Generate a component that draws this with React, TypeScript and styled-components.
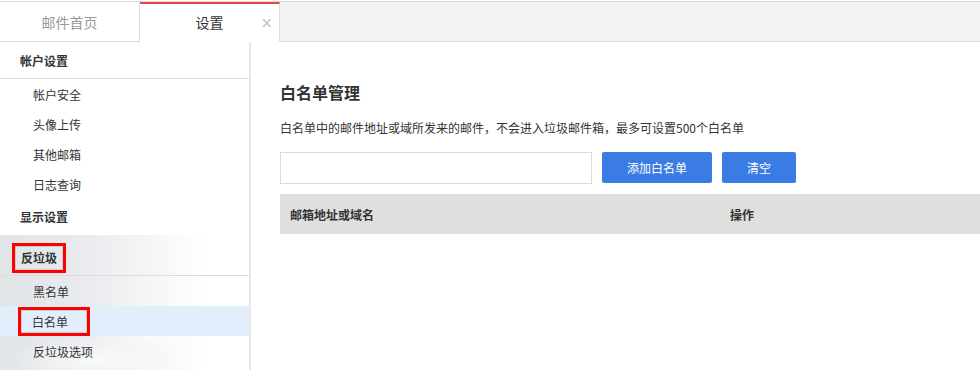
import React from "react";
import styled, { createGlobalStyle } from "styled-components";

const Global = createGlobalStyle`
  html, body { margin: 0; padding: 0; overflow: hidden; background: #fff; }
  body { font-family: "Noto Sans CJK SC", "Microsoft YaHei", "Noto Sans", sans-serif; color: #333; }
  * { box-sizing: border-box; }
`;

const Page = styled.div`
  width: 980px;
  height: 370px;
  padding-top: 1px;
  display: flex;
  flex-direction: column;
  overflow: hidden;
`;

const TabBar = styled.div`
  display: flex;
  height: 41px;
  border-top: 1px solid #dcdcdc;
  flex: none;
`;

const Tab = styled.div<{ $active?: boolean }>`
  position: relative;
  width: 140px;
  display: flex;
  align-items: center;
  justify-content: center;
  font-size: 14px;
  color: ${(p) => (p.$active ? "#333" : "#999")};
  background: #fff;
  border-right: 1px solid #dcdcdc;
  border-bottom: 1px solid ${(p) => (p.$active ? "#fff" : "#dcdcdc")};
  border-top: 2px solid ${(p) => (p.$active ? "#e8474a" : "transparent")};
  padding-bottom: 1px;
`;

const Close = styled.span`
  position: absolute;
  right: 6px;
  top: 11px;
  font-size: 15px;
  color: #c4c4c4;
  font-family: "DejaVu Sans", sans-serif;
  line-height: 16px;
`;

const TabFill = styled.div`
  flex: 1;
  background: #f2f2f2;
  border-bottom: 1px solid #dcdcdc;
`;

const Body = styled.div`
  flex: 1;
  display: flex;
  min-height: 0;
`;

const Sidebar = styled.div`
  width: 251px;
  flex: none;
  border-right: 2px solid #e8e8e8;
  display: flex;
  flex-direction: column;
`;

const Section = styled.div<{ $bg?: boolean }>`
  display: flex;
  flex-direction: column;
  ${(p) =>
    p.$bg
      ? `background:
          radial-gradient(ellipse 60px 20px at 150px 95px, rgba(255,255,255,0.8), rgba(255,255,255,0) 100%),
          radial-gradient(ellipse 80px 25px at 90px 125px, rgba(255,255,255,0.7), rgba(255,255,255,0) 100%),
          linear-gradient(to right, #e1e5e8 0%, #e9ebee 35%, #f5f6f7 62%, #ffffff 82%);
        flex: 1;`
      : ""}
`;

const Header = styled.div<{ $border?: boolean; $tall?: boolean }>`
  height: ${(p) => (p.$tall ? "41px" : p.$border ? "37px" : "36px")};
  padding-left: 20px;
  padding-top: ${(p) => (p.$tall ? "6px" : "0")};
  display: flex;
  align-items: center;
  font-size: 12px;
  font-weight: bold;
  color: #333;
  border-bottom: 1px solid ${(p) => (p.$border ? "#dcdcdc" : "transparent")};
  flex: none;
`;

const Item = styled.div<{ $active?: boolean }>`
  height: 30px;
  padding-left: 33px;
  display: flex;
  align-items: center;
  font-size: 12px;
  color: #333;
  background: ${(p) => (p.$active ? "#e2eefc" : "transparent")};
  flex: none;
`;

const Marked = styled.span<{ $pad: string }>`
  display: inline-block;
  line-height: 18px;
  padding: ${(p) => p.$pad};
  outline: 3px solid #f00;
  border: 1px solid #c9ccd0;
`;

const MarkedHead = styled(Marked)`
  margin-left: -5px;
`;

const MarkedItem = styled(Marked)`
  margin-left: -12px;
`;

const Main = styled.div`
  flex: 1;
  padding: 38px 0 0 29px;
  display: flex;
  flex-direction: column;
`;

const Title = styled.h2`
  margin: 0;
  font-size: 16px;
  line-height: 24px;
  font-weight: bold;
  color: #333;
`;

const Desc = styled.p`
  margin: 14px 0 0;
  font-size: 12px;
  line-height: 20px;
  color: #333;
`;

const FormRow = styled.div`
  display: flex;
  gap: 10px;
  margin-top: 14px;
`;

const Input = styled.input`
  width: 312px;
  height: 32px;
  border: 1px solid #dcdcdc;
  outline: none;
  padding: 0 8px;
  font-size: 12px;
`;

const Button = styled.button<{ $w: number }>`
  width: ${(p) => p.$w}px;
  height: 31px;
  border: none;
  border-radius: 2px;
  background: #3b7ce4;
  color: #fff;
  font-size: 12px;
  font-family: inherit;
  padding: 0;
  cursor: pointer;
`;

const TableHead = styled.div`
  margin-top: 10px;
  height: 40px;
  background: #dfdfdf;
  display: grid;
  grid-template-columns: 450px 1fr;
  align-items: center;
  font-size: 12px;
  font-weight: bold;
  color: #333;
`;

const Col = styled.div<{ $pad?: number }>`
  padding-left: ${(p) => p.$pad ?? 0}px;
`;

export default function App() {
  return (
    <Page>
      <Global />
      <TabBar>
        <Tab>邮件首页</Tab>
        <Tab $active>
          设置
          <Close>×</Close>
        </Tab>
        <TabFill />
      </TabBar>
      <Body>
        <Sidebar>
          <Section>
            <Header $border>帐户设置</Header>
            <Item>帐户安全</Item>
            <Item>头像上传</Item>
            <Item>其他邮箱</Item>
            <Item>日志查询</Item>
          </Section>
          <Section>
            <Header>显示设置</Header>
          </Section>
          <Section $bg>
            <Header $border $tall>
              <MarkedHead $pad="2px 5px">反垃圾</MarkedHead>
            </Header>
            <Item>黑名单</Item>
            <Item $active>
              <MarkedItem $pad="2px 18px 1px 10px">白名单</MarkedItem>
            </Item>
            <Item>反垃圾选项</Item>
            <Item>邮件过滤</Item>
          </Section>
        </Sidebar>
        <Main>
          <Title>白名单管理</Title>
          <Desc>白名单中的邮件地址或域所发来的邮件，不会进入垃圾邮件箱，最多可设置500个白名单</Desc>
          <FormRow>
            <Input />
            <Button $w={110}>添加白名单</Button>
            <Button $w={74}>清空</Button>
          </FormRow>
          <TableHead>
            <Col $pad={10}>邮箱地址或域名</Col>
            <Col>操作</Col>
          </TableHead>
        </Main>
      </Body>
    </Page>
  );
}
